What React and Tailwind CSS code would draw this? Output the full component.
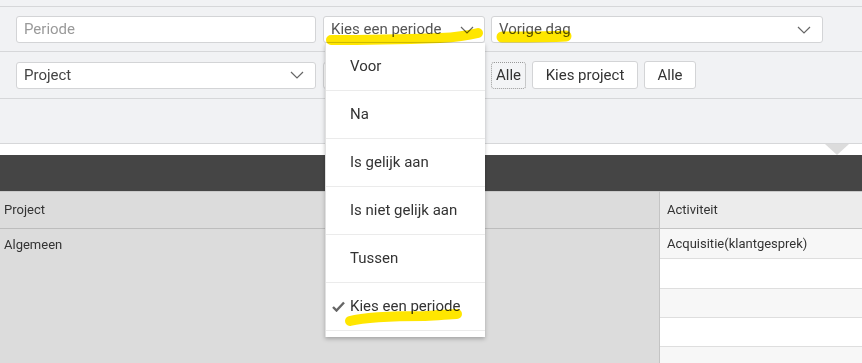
import React from "react";

const Chevron = ({ className = "" }) => (
  <svg width="14" height="8" viewBox="0 0 14 8" className={className}>
    <path d="M1 1 L7 7 L13 1" fill="none" stroke="#666" strokeWidth="1.2" />
  </svg>
);

const items = ["Voor", "Na", "Is gelijk aan", "Is niet gelijk aan", "Tussen", "Kies een periode"];

export default function App() {
  return (
    <div
      className="relative w-[862px] h-[363px] overflow-hidden bg-[#f1f2f4]"
      style={{ fontFamily: "Roboto, 'Liberation Sans', sans-serif" }}
    >
      <div className="h-[6px]" />
      {/* Row 1 */}
      <div className="border-t border-[#d6d7d9] pt-[9px] pb-[8px] flex items-center pl-[16px]">
        <div className="w-[300px] h-[27px] bg-white border border-[#d3d4d6] rounded-[3px] flex items-center px-[7px] text-[15px] text-[#9a9a9a]">
          Periode
        </div>
        <div className="ml-[7px] w-[162px] h-[27px] bg-white border border-[#d3d4d6] rounded-[3px] flex items-center justify-between pl-[7px] pr-[10px] text-[15px] text-[#555]">
          <span>Kies een periode</span>
          <Chevron />
        </div>
        <div className="ml-[6px] w-[332px] h-[27px] bg-white border border-[#d3d4d6] rounded-[3px] flex items-center justify-between pl-[7px] pr-[11px] text-[15px] text-[#555]">
          <span>Vorige dag</span>
          <Chevron />
        </div>
      </div>
      {/* Row 2 */}
      <div className="border-t border-[#d6d7d9] pt-[9px] pb-[9px] flex items-center pl-[16px]">
        <div className="w-[300px] h-[27px] bg-white border border-[#d3d4d6] rounded-[3px] flex items-center justify-between pl-[7px] pr-[11px] text-[15px] text-[#444]">
          <span>Project</span>
          <Chevron />
        </div>
        <div className="ml-[7px] w-[162px] h-[27px] bg-white border border-[#d3d4d6] rounded-[3px]" />
        <div className="ml-[6px] w-[35px] h-[27px] border border-dotted border-[#999] rounded-[3px] bg-[#f3f4f6] flex items-center justify-center text-[15px] text-[#333]">
          Alle
        </div>
        <div className="ml-[6px] w-[106px] h-[28px] bg-white border border-[#d3d4d6] rounded-[3px] flex items-center justify-center text-[15px] text-[#333]">
          Kies project
        </div>
        <div className="ml-[6px] w-[52px] h-[28px] bg-white border border-[#d3d4d6] rounded-[3px] flex items-center justify-center text-[15px] text-[#333]">
          Alle
        </div>
      </div>
      {/* gray area */}
      <div className="border-t border-[#d6d7d9] h-[45px]" />
      {/* white strip with triangle */}
      <div className="border-t border-[#d6d7d9] h-[12px] bg-white flex justify-end pr-[13px]">
        <div className="w-0 h-0 border-l-[12px] border-r-[12px] border-t-[11px] border-l-transparent border-r-transparent border-t-[#dcdcdc]" />
      </div>
      {/* dark bar */}
      <div className="h-[36px] bg-[#454545]" />
      {/* table */}
      <div className="flex text-[13px] text-[#333]">
        <div className="w-[659px] bg-[#dcdcdc]">
          <div className="h-[37px] border-t border-[#c9c9c9] flex items-center pl-[4px]">Project</div>
          <div className="border-t border-[#bdbdbd] h-[140px] pl-[4px] pt-[6px]">Algemeen</div>
        </div>
        <div className="flex-1 border-l border-[#c4c4c4]">
          <div className="h-[37px] bg-[#ececec] border-t border-[#c9c9c9] flex items-center pl-[7px]">Activiteit</div>
          <div className="h-[30px] bg-[#f7f7f7] border-t border-[#c4c4c4] flex items-center pl-[7px]">Acquisitie(klantgesprek)</div>
          <div className="h-[30px] bg-white border-t border-[#dedede]" />
          <div className="h-[29px] bg-[#f7f7f7] border-t border-[#dedede]" />
          <div className="h-[29px] bg-white border-t border-[#dedede]" />
          <div className="h-[29px] bg-[#f7f7f7] border-t border-[#dedede]" />
        </div>
      </div>

      {/* dropdown menu */}
      <div className="absolute left-[325px] top-[43px] w-[160px] bg-white shadow-[0_2px_4px_rgba(0,0,0,0.25)] border-l border-[#e0e0e0]">
        {items.map((t, i) => (
          <div
            key={t}
            className="h-[48px] border-b border-[#ebebeb] flex items-center pl-[24px] text-[15px] text-[#333] relative"
          >
            {i === items.length - 1 && (
              <svg className="absolute left-[6px] top-[18px]" width="13" height="11" viewBox="0 0 13 11">
                <path d="M1 6 L4.5 9.5 L12 1.5" fill="none" stroke="#666" strokeWidth="2.4" />
              </svg>
            )}
            {t}
          </div>
        ))}
        <div className="h-[6px]" />
      </div>

      {/* yellow highlighter marks */}
      <svg className="absolute left-0 top-0 pointer-events-none mix-blend-multiply" width="862" height="363">
        <path d="M331 40 C370 40 410 39 440 38 C460 37 470 35 478 33" fill="none" stroke="#ffe600" strokeWidth="10" strokeLinecap="round" />
        <path d="M502 37 C525 37 548 37 566 36" fill="none" stroke="#ffe600" strokeWidth="11" strokeLinecap="round" />
        <path d="M350 321 C365 317 395 316 425 316 C442 315 452 314 457 314" fill="none" stroke="#ffe600" strokeWidth="10" strokeLinecap="round" />
      </svg>
    </div>
  );
}
